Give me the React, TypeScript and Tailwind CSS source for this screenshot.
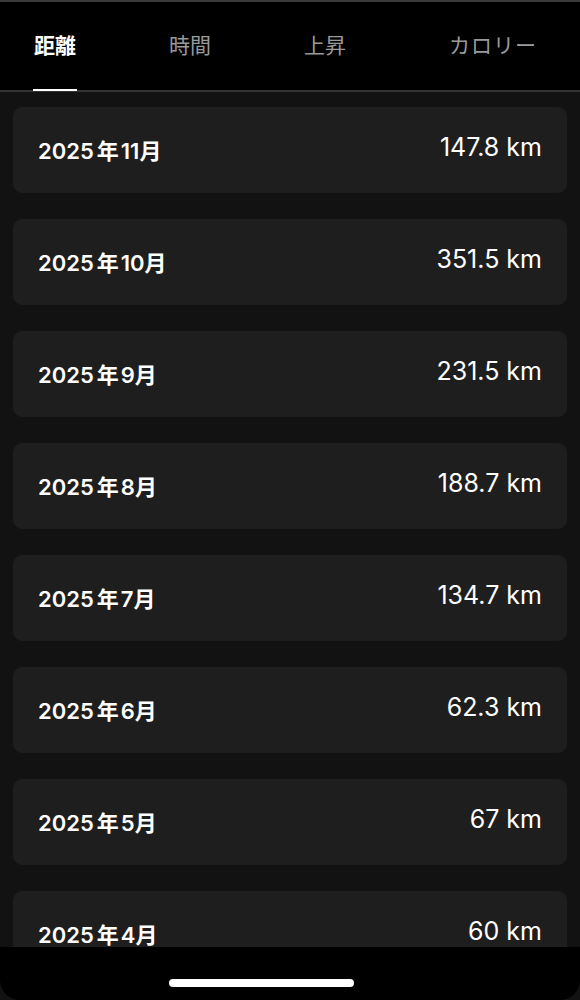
import React from "react";

const rows: [string, string, string][] = [
  ["2025", "11", "147.8 km"],
  ["2025", "10", "351.5 km"],
  ["2025", "9", "231.5 km"],
  ["2025", "8", "188.7 km"],
  ["2025", "7", "134.7 km"],
  ["2025", "6", "62.3 km"],
  ["2025", "5", "67 km"],
  ["2025", "4", "60 km"],
];

export default function App() {
  const font = { fontFamily: 'Inter, "Noto Sans CJK JP", sans-serif' };
  return (
    <div className="relative w-[580px] h-[1000px] overflow-hidden bg-[#121212] flex flex-col" style={font}>
      <div className="h-[2px] bg-[#3a3a3a]" />
      <div className="relative h-[90px] bg-black border-b-2 border-[#333333] flex items-start">
        <div className="flex items-center h-[88px] pb-[2px] text-[21px] leading-none">
          <div className="relative ml-[33px] w-[44px] h-full flex items-center justify-center text-white font-bold">
            距離
            <div className="absolute left-0 right-0 bottom-[-3px] h-[2px] bg-white" />
          </div>
          <div className="ml-[91px] w-[44px] text-center text-[#9a9a9a]">時間</div>
          <div className="ml-[91px] w-[44px] text-center text-[#9a9a9a]">上昇</div>
          <div className="ml-[102px] text-[#9a9a9a] tracking-[1px]">カロリー</div>
        </div>
      </div>
      <div className="flex flex-col gap-[26px] px-[13px] pt-[15px]">
        {rows.map(([y, m, value]) => (
          <div key={m} className="h-[86px] shrink-0 rounded-[9px] bg-[#1e1e1e] flex items-center justify-between pl-[25px] pr-[25px]">
            <span className="text-white font-semibold text-[22px] leading-none pt-[1px] flex items-baseline">
              <span>{y}</span>
              <span className="ml-[3px] mr-[2px]">年</span>
              <span>{m}</span>
              <span>月</span>
            </span>
            <span className="text-white text-[25px] leading-none mb-[5px]">{value}</span>
          </div>
        ))}
      </div>
      <div className="absolute left-0 right-0 bottom-0 h-[53px] bg-black rounded-b-[20px] flex justify-start">
        <div className="mt-[32px] ml-[169px] w-[185px] h-[8px] rounded-full bg-white" />
      </div>
    </div>
  );
}
